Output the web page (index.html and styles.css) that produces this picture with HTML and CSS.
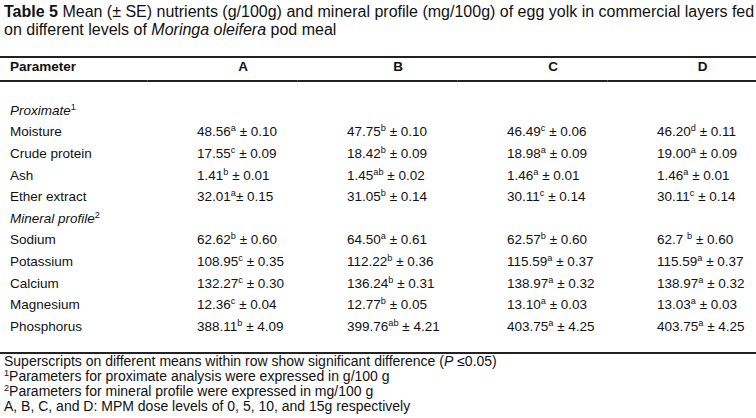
FILE: index.html
```html
<!DOCTYPE html>
<html lang="en">
<head>
<meta charset="utf-8">
<title>Table 5</title>
<link rel="stylesheet" href="styles.css">
</head>
<body>
<div class="page">
  <p class="caption"><b>Table 5</b> Mean (± SE) nutrients (g/100g) and mineral profile (mg/100g) of egg yolk in commercial layers fed on different levels of <i>Moringa oleifera</i> pod meal</p>

  <div class="table">
    <div class="row head">
      <div class="cell name">Parameter</div>
      <div class="cell val tick">A</div>
      <div class="cell val tick">B</div>
      <div class="cell val tick">C</div>
      <div class="cell val tick">D</div>
    </div>

    <div class="body">
      <div class="row"><div class="cell name group"><i>Proximate</i><sup class="s">1</sup></div></div>
      <div class="row">
        <div class="cell name">Moisture</div>
        <div class="cell val">48.56<sup class="s">a</sup> ± 0.10</div>
        <div class="cell val">47.75<sup class="s">b</sup> ± 0.10</div>
        <div class="cell val">46.49<sup class="s">c</sup> ± 0.06</div>
        <div class="cell val">46.20<sup class="s">d</sup> ± 0.11</div>
      </div>
      <div class="row">
        <div class="cell name">Crude protein</div>
        <div class="cell val">17.55<sup class="s">c</sup> ± 0.09</div>
        <div class="cell val">18.42<sup class="s">b</sup> ± 0.09</div>
        <div class="cell val">18.98<sup class="s">a</sup> ± 0.09</div>
        <div class="cell val">19.00<sup class="s">a</sup> ± 0.09</div>
      </div>
      <div class="row">
        <div class="cell name">Ash</div>
        <div class="cell val">1.41<sup class="s">b</sup> ± 0.01</div>
        <div class="cell val">1.45<sup class="s">ab</sup> ± 0.02</div>
        <div class="cell val">1.46<sup class="s">a</sup> ± 0.01</div>
        <div class="cell val">1.46<sup class="s">a</sup> ± 0.01</div>
      </div>
      <div class="row">
        <div class="cell name">Ether extract</div>
        <div class="cell val">32.01<sup class="s">a</sup>± 0.15</div>
        <div class="cell val">31.05<sup class="s">b</sup> ± 0.14</div>
        <div class="cell val">30.11<sup class="s">c</sup> ± 0.14</div>
        <div class="cell val">30.11<sup class="s">c</sup> ± 0.14</div>
      </div>
      <div class="row"><div class="cell name group"><i>Mineral profile</i><sup class="s">2</sup></div></div>
      <div class="row">
        <div class="cell name">Sodium</div>
        <div class="cell val">62.62<sup class="s">b</sup> ± 0.60</div>
        <div class="cell val">64.50<sup class="s">a</sup> ± 0.61</div>
        <div class="cell val">62.57<sup class="s">b</sup> ± 0.60</div>
        <div class="cell val">62.7 <sup class="s">b</sup> ± 0.60</div>
      </div>
      <div class="row">
        <div class="cell name">Potassium</div>
        <div class="cell val">108.95<sup class="s">c</sup> ± 0.35</div>
        <div class="cell val">112.22<sup class="s">b</sup> ± 0.36</div>
        <div class="cell val">115.59<sup class="s">a</sup> ± 0.37</div>
        <div class="cell val">115.59<sup class="s">a</sup> ± 0.37</div>
      </div>
      <div class="row">
        <div class="cell name">Calcium</div>
        <div class="cell val">132.27<sup class="s">c</sup> ± 0.30</div>
        <div class="cell val">136.24<sup class="s">b</sup> ± 0.31</div>
        <div class="cell val">138.97<sup class="s">a</sup> ± 0.32</div>
        <div class="cell val">138.97<sup class="s">a</sup> ± 0.32</div>
      </div>
      <div class="row">
        <div class="cell name">Magnesium</div>
        <div class="cell val">12.36<sup class="s">c</sup> ± 0.04</div>
        <div class="cell val">12.77<sup class="s">b</sup> ± 0.05</div>
        <div class="cell val">13.10<sup class="s">a</sup> ± 0.03</div>
        <div class="cell val">13.03<sup class="s">a</sup> ± 0.03</div>
      </div>
      <div class="row">
        <div class="cell name">Phosphorus</div>
        <div class="cell val">388.11<sup class="s">b</sup> ± 4.09</div>
        <div class="cell val">399.76<sup class="s">ab</sup> ± 4.21</div>
        <div class="cell val">403.75<sup class="s">a</sup> ± 4.25</div>
        <div class="cell val">403.75<sup class="s">a</sup> ± 4.25</div>
      </div>
    </div>
  </div>

  <div class="notes">
    <p>Superscripts on different means within row show significant difference (<i>P</i> ≤0.05)</p>
    <p><sup class="s">1</sup>Parameters for proximate analysis were expressed in g/100 g</p>
    <p><sup class="s">2</sup>Parameters for mineral profile were expressed in mg/100 g</p>
    <p>A, B, C, and D: MPM dose levels of 0, 5, 10, and 15g respectively</p>
  </div>
</div>
</body>
</html>
```

FILE: styles.css
```css
* { box-sizing: border-box; }
html, body { margin: 0; padding: 0; background: #fff; }
body {
  font-family: "Liberation Sans", Arial, sans-serif;
  color: #111;
  width: 756px;
  height: 418px;
  overflow: hidden;
}
.page { display: flex; flex-direction: column; }

.caption {
  margin: 0;
  padding: 3px 0 0 4px;
  font-size: 16px;
  line-height: 18px;
}

.table {
  margin-top: 17px;
  border-top: 2px solid #222;
  border-bottom: 2px solid #222;
}

.row {
  display: grid;
  grid-template-columns: 147px 150px 160px 150px 149px;
  height: 21.6px;
  align-items: center;
  font-size: 13.5px;
  line-height: 16px;
  white-space: nowrap;
}

.head {
  height: 24px;
  padding-bottom: 4px;
  border-bottom: 2px solid #222;
  font-weight: bold;
}
.head .val { text-align: center; padding-right: 8px; }

.cell.name { padding-left: 10px; }
.cell.val { padding-left: 50px; position: relative; }

.tick::before {
  content: "";
  position: absolute;
  left: 0;
  bottom: -7px;
  width: 1px;
  height: 2px;
  background: #555;
}

.body { padding: 18px 0 14px; }

.s {
  font-size: 0.68em;
  line-height: 0;
  vertical-align: 0.5em;
}

.notes { font-size: 14px; line-height: 15px; padding-left: 4px; }
.notes p { margin: 0; }
.notes .s { font-size: 0.65em; vertical-align: 0.55em; }
```
